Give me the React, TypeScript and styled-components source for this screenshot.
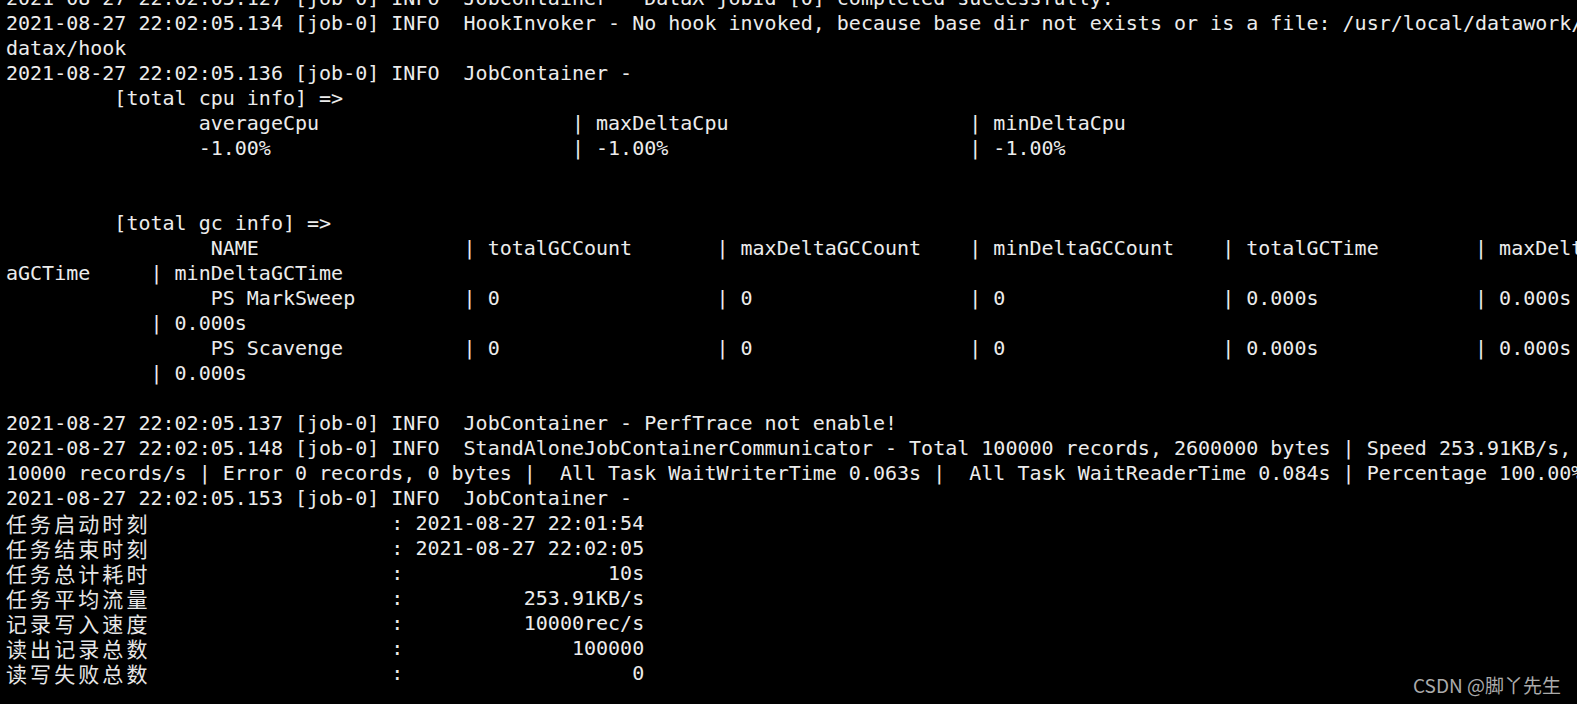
import React from "react";
import styled, { createGlobalStyle } from "styled-components";

const Global = createGlobalStyle`
  html, body {
    margin: 0;
    padding: 0;
    background: #000;
    overflow: hidden;
  }
  #root {
    width: 1577px;
    height: 704px;
  }
`;

const Screen = styled.div`
  position: relative;
  width: 1577px;
  height: 704px;
  background: #000;
  overflow: hidden;
`;

const Terminal = styled.div`
  display: flex;
  flex-direction: column;
  margin-top: -14px;
  padding-left: 6px;
  font-family: "DejaVu Sans Mono", "Liberation Mono", monospace;
  font-size: 20px;
  color: #ececec;
`;

const Line = styled.div`
  height: 25px;
  line-height: 25px;
  white-space: pre;
  overflow: visible;
`;

const Wide = styled.span`
  display: inline-block;
  vertical-align: top;
  height: 25px;
  line-height: 25px;
  font-family: "Noto Sans CJK SC", sans-serif;
  font-size: 21px;
  letter-spacing: 3.08px;
  color: #e6e6e6;
`;

const Watermark = styled.div`
  position: absolute;
  right: 16px;
  bottom: 6px;
  font-family: "Noto Sans CJK SC", "Noto Sans", sans-serif;
  font-size: 19px;
  color: #ababab;
  white-space: nowrap;
`;

const pad = (s: string, n: number) => s + " ".repeat(Math.max(0, n - s.length));
const lpad = (s: string, n: number) => " ".repeat(Math.max(0, n - s.length)) + s;

const sp = (n: number) => " ".repeat(n);

const logLines: string[] = [
  "2021-08-27 22:02:05.127 [job-0] INFO  JobContainer - DataX jobId [0] completed successfully.",
  "2021-08-27 22:02:05.134 [job-0] INFO  HookInvoker - No hook invoked, because base dir not exists or is a file: /usr/local/datawork/",
  "datax/hook",
  "2021-08-27 22:02:05.136 [job-0] INFO  JobContainer -",
  sp(9) + "[total cpu info] =>",
  pad(sp(16) + "averageCpu", 47) + pad("| maxDeltaCpu", 33) + "| minDeltaCpu",
  pad(sp(16) + "-1.00%", 47) + pad("| -1.00%", 33) + "| -1.00%",
  "",
  "",
  sp(9) + "[total gc info] =>",
  pad(sp(17) + "NAME", 38) +
    pad("| totalGCCount", 21) +
    pad("| maxDeltaGCCount", 21) +
    pad("| minDeltaGCCount", 21) +
    pad("| totalGCTime", 21) +
    "| maxDelt",
  pad("aGCTime", 12) + "| minDeltaGCTime",
  pad(sp(17) + "PS MarkSweep", 38) +
    pad("| 0", 21) +
    pad("| 0", 21) +
    pad("| 0", 21) +
    pad("| 0.000s", 21) +
    "| 0.000s",
  sp(12) + "| 0.000s",
  pad(sp(17) + "PS Scavenge", 38) +
    pad("| 0", 21) +
    pad("| 0", 21) +
    pad("| 0", 21) +
    pad("| 0.000s", 21) +
    "| 0.000s",
  sp(12) + "| 0.000s",
  "",
  "2021-08-27 22:02:05.137 [job-0] INFO  JobContainer - PerfTrace not enable!",
  "2021-08-27 22:02:05.148 [job-0] INFO  StandAloneJobContainerCommunicator - Total 100000 records, 2600000 bytes | Speed 253.91KB/s, ",
  "10000 records/s | Error 0 records, 0 bytes |  All Task WaitWriterTime 0.063s |  All Task WaitReaderTime 0.084s | Percentage 100.00%",
  "2021-08-27 22:02:05.153 [job-0] INFO  JobContainer -",
];

const summary: [string, string][] = [
  ["任务启动时刻", "2021-08-27 22:01:54"],
  ["任务结束时刻", "2021-08-27 22:02:05"],
  ["任务总计耗时", "10s"],
  ["任务平均流量", "253.91KB/s"],
  ["记录写入速度", "10000rec/s"],
  ["读出记录总数", "100000"],
  ["读写失败总数", "0"],
];

export default function App() {
  return (
    <>
      <Global />
      <Screen>
        <Terminal>
          {logLines.map((l, i) => (
            <Line key={i}>{l === "" ? " " : l}</Line>
          ))}
          {summary.map(([label, value], i) => (
            <Line key={"s" + i}>
              <Wide>{label}</Wide>
              {sp(20) + ": " + lpad(value, 19)}
            </Line>
          ))}
        </Terminal>
        <Watermark>CSDN @脚丫先生</Watermark>
      </Screen>
    </>
  );
}
